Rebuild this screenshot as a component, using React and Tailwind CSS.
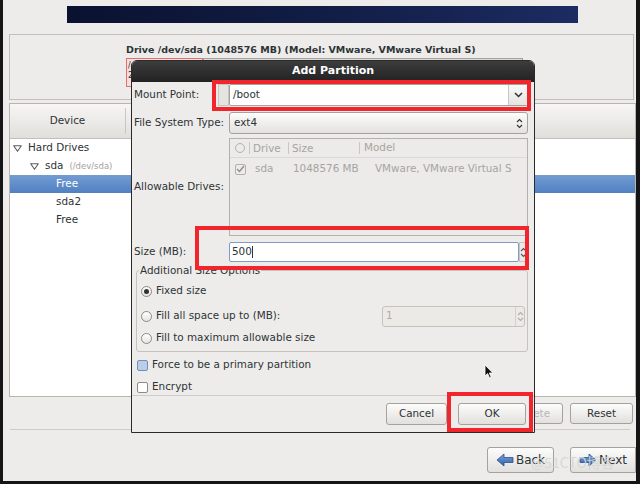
import React from 'react'

function Tri() {
  return (
    <svg width="9" height="7" viewBox="0 0 9 7" className="shrink-0">
      <path d="M0.7 0.7 H8.3 L4.5 6.3 Z" fill="none" stroke="#5c5c5c" strokeWidth="1.1" strokeLinejoin="round" />
    </svg>
  )
}

function Radio({ checked }) {
  return (
    <span className="w-[11px] h-[11px] rounded-full border border-[#8d8a85] bg-gradient-to-b from-white to-[#e6e4e1] flex items-center justify-center shrink-0">
      {checked && <span className="w-[5px] h-[5px] rounded-full bg-[#2e3436]" />}
    </span>
  )
}

function Box({ blue }) {
  return (
    <span
      className={`w-[11px] h-[11px] rounded-[2px] border shrink-0 ${
        blue ? 'border-[#6f8fbf] bg-[#bccde6]' : 'border-[#8d8a85] bg-white'
      }`}
    />
  )
}

function Btn({ children, className = '', dim }) {
  return (
    <div
      className={`flex items-center justify-center rounded-[3px] border border-[#a5a29d] bg-gradient-to-b from-[#fcfcfb] to-[#e2e0dd] ${
        dim ? 'text-[#b9b6b1]' : 'text-[#2e3436]'
      } ${className}`}
    >
      {children}
    </div>
  )
}

function Chevron() {
  return (
    <svg width="9" height="6" viewBox="0 0 9 6">
      <path d="M1 1 L4.5 4.5 L8 1" fill="none" stroke="#2e3436" strokeWidth="1.5" />
    </svg>
  )
}

function UpDown({ color = '#2e3436' }) {
  return (
    <svg width="7" height="11" viewBox="0 0 7 11">
      <path d="M1 4 L3.5 1.5 L6 4 M1 7 L3.5 9.5 L6 7" fill="none" stroke={color} strokeWidth="1.1" />
    </svg>
  )
}

function Arrow({ dir }) {
  const d = dir === 'left' ? 'M1 7 L8 1 V4.5 H17 V9.5 H8 V13 Z' : 'M17 7 L10 1 V4.5 H1 V9.5 H10 V13 Z'
  return (
    <svg width="18" height="14" viewBox="0 0 18 14">
      <defs>
        <linearGradient id={`g${dir}`} x1="0" y1="0" x2="0" y2="1">
          <stop offset="0" stopColor="#7aa3dc" />
          <stop offset="1" stopColor="#2f5fa8" />
        </linearGradient>
      </defs>
      <path d={d} fill={`url(#g${dir})`} stroke="#284f8c" strokeWidth="0.8" strokeLinejoin="round" />
    </svg>
  )
}

const tree = [
  { pad: 'pl-[3px]', tri: true, label: 'Hard Drives' },
  { pad: 'pl-[20px]', tri: true, label: 'sda', sub: '(/dev/sda)' },
  { pad: 'pl-[46px]', label: 'Free', sel: true },
  { pad: 'pl-[46px]', label: 'sda2' },
  { pad: 'pl-[46px]', label: 'Free' },
]

function AddPartition() {
  return (
    <div className="absolute left-[131px] top-[60px] w-[404px] h-[373px] border border-[#2a2a2a] rounded-t-[6px] bg-[#edeceb] flex flex-col overflow-hidden">
      <div className="h-[21px] shrink-0 bg-gradient-to-b from-[#3d3d3d] to-[#222] flex items-center justify-center text-white font-bold text-[11px]">
        Add Partition
      </div>

      <div className="flex flex-col pl-[2px] pr-[6px]">
        {/* mount point */}
        <div className="mt-[2px] h-[22px] flex items-center">
          <span className="w-[84px]">Mount Point:</span>
          <div className="w-[11px] h-[22px] border border-[#c9c6c1] bg-[#e6e4e1]" />
          <div className="flex-1 h-[22px] flex border border-[#a5a29d] bg-white rounded-[2px]">
            <span className="flex-1 flex items-center pl-[3px]">/boot</span>
            <span className="w-[19px] border-l border-[#c9c6c1] bg-gradient-to-b from-[#fafaf9] to-[#e6e4e1] flex items-center justify-center">
              <Chevron />
            </span>
          </div>
        </div>

        {/* fs type */}
        <div className="mt-[6px] h-[22px] flex items-center">
          <span className="w-[95px]">File System Type:</span>
          <div className="flex-1 h-[22px] flex items-center justify-between pl-[4px] pr-[4px] border border-[#a5a29d] rounded-[3px] bg-gradient-to-b from-[#fcfcfb] to-[#e4e2df]">
            <span>ext4</span>
            <UpDown />
          </div>
        </div>

        {/* drives */}
        <div className="mt-[4px] h-[98px] flex items-center">
          <span className="w-[95px]">Allowable Drives:</span>
          <div className="flex-1 h-[98px] border border-[#b4b1ac] bg-[#ecebe9] text-[#a7a49f] flex flex-col">
            <div className="h-[19px] flex items-center border-b border-[#dcdad6]">
              <span className="w-[20px] flex justify-center border-r border-[#c9c6c1] h-[12px] items-center">
                <span className="w-[10px] h-[10px] rounded-full border border-[#b4b1ac]" />
              </span>
              <span className="w-[39px] pl-[3px] border-r border-[#c9c6c1] leading-[12px]">Drive</span>
              <span className="w-[71px] pl-[3px] border-r border-[#c9c6c1] leading-[12px]">Size</span>
              <span className="pl-[4px]">Model</span>
            </div>
            <div className="h-[22px] flex items-center">
              <span className="w-[20px] flex justify-center">
                <span className="w-[11px] h-[11px] border border-[#b4b1ac] rounded-[2px] flex items-center justify-center">
                  <svg width="9" height="8" viewBox="0 0 9 8">
                    <path d="M1 4 L3.5 6.5 L8 1" fill="none" stroke="#8f8c87" strokeWidth="1.4" />
                  </svg>
                </span>
              </span>
              <span className="w-[39px] pl-[5px]">sda</span>
              <span className="w-[86px] pl-[4px]">1048576 MB</span>
              <span>VMware, VMware Virtual S</span>
            </div>
          </div>
        </div>

        {/* size */}
        <div className="mt-[6px] h-[20px] flex items-center">
          <span className="w-[95px]">Size (MB):</span>
          <div className="flex-1 h-[20px] flex">
            <span className="flex-1 flex items-center pl-[2px] bg-white border border-[#7d9cc8] rounded-[2px]">
              500<span className="w-px h-[12px] bg-[#2e3436]" />
            </span>
            <span className="w-[9px] flex items-center justify-center border border-[#c9c6c1] bg-[#eceae7]">
              <UpDown color="#555" />
            </span>
          </div>
        </div>

        {/* additional options */}
        <div className="relative mt-[8px] ml-[2px] h-[82px] border border-[#c6c3be] rounded-[3px] flex flex-col pl-[4px] pr-[2px]">
          <span className="absolute -top-[8px] left-[2px] px-[1px] bg-[#edeceb]">Additional Size Options</span>
          <div className="mt-[12px] h-[16px] flex items-center gap-[4px]">
            <Radio checked />
            <span>Fixed size</span>
          </div>
          <div className="mt-[6px] h-[22px] flex items-center gap-[4px]">
            <Radio />
            <span className="flex-1">Fill all space up to (MB):</span>
            <div className="w-[143px] h-[21px] flex border border-[#c6c3be] rounded-[3px] bg-[#eceae7] text-[#b0ada8]">
              <span className="flex-1 flex items-center pl-[3px]">1</span>
              <span className="w-[9px] flex items-center justify-center border-l border-[#d3d0cb]">
                <UpDown color="#b0ada8" />
              </span>
            </div>
          </div>
          <div className="mt-[3px] h-[16px] flex items-center gap-[4px]">
            <Radio />
            <span>Fill to maximum allowable size</span>
          </div>
        </div>

        <div className="mt-[6px] h-[14px] flex items-center gap-[4px] pl-[3px]">
          <Box blue />
          <span>Force to be a primary partition</span>
        </div>
        <div className="mt-[8px] h-[14px] flex items-center gap-[4px] pl-[3px]">
          <Box />
          <span>Encrypt</span>
        </div>
      </div>

      <div className="mt-[1px] h-px bg-[#cfccc7]" />
      <div className="mt-[7px] flex justify-end gap-[11px] pr-[8px]">
        <Btn className="w-[61px] h-[22px]">Cancel</Btn>
        <Btn className="w-[68px] h-[22px]">OK</Btn>
      </div>
    </div>
  )
}

export default function App() {
  return (
    <div className="relative w-[640px] h-[484px] overflow-hidden bg-[#151515] pl-[3px] pr-[4px] pb-[3px] font-['DejaVu_Sans',sans-serif] text-[10.4px] text-[#2e3436]">
      <div className="h-full bg-[#edeceb] flex flex-col">
        <div className="mt-[6px] ml-[64px] w-[511px] h-[17px] bg-gradient-to-r from-[#0a1230] via-[#121d45] to-[#1c2b62]" />

        <div className="mt-[11px] ml-[6px] mr-[2px] h-[66px] border border-[#c2bfba] pl-[116px] pt-[9px]">
          <div className="font-bold text-[9.5px] leading-[12px]">Drive /dev/sda (1048576 MB) (Model: VMware, VMware Virtual S)</div>
          <div className="mt-[2px] h-[29px] flex">
            <div className="w-[77px] border border-[#e07070] bg-[#f4dede] text-[8px] leading-[10px] pl-[1px] pt-[2px]">
              <div>/dev/sda1</div>
              <div>200 MB</div>
            </div>
            <div className="w-[320px] border border-[#a5a29d] bg-[#dcdad6]" />
          </div>
        </div>

        <div className="mt-[3px] ml-[6px] h-[294px] border border-[#b8b5b0] flex flex-col">
          <div className="h-[35px] shrink-0 flex items-center bg-gradient-to-b from-[#f7f6f5] to-[#e1dfdb] border-b border-[#c2bfba]">
            <span className="w-[115px] text-center">Device</span>
            <span className="w-px h-[26px] bg-[#c9c6c1]" />
          </div>
          <div className="flex-1 bg-white flex flex-col">
            {tree.map((r, i) => (
              <div
                key={i}
                className={`h-[18px] flex items-center gap-[6px] ${r.pad} ${
                  r.sel ? 'bg-gradient-to-b from-[#729cd2] to-[#5181c2] text-white' : ''
                }`}
              >
                {r.tri && <Tri />}
                <span>{r.label}</span>
                {r.sub && <span className="text-[8.5px] text-[#a3a09b]">{r.sub}</span>}
              </div>
            ))}
          </div>
        </div>

        <div className="mt-[6px] h-[21px] flex justify-end gap-[7px] pr-[3px]">
          <Btn className="w-[60px] h-[21px]" dim>Delete</Btn>
          <Btn className="w-[63px] h-[21px]">Reset</Btn>
        </div>

        <div className="mt-[5px] ml-[7px] mr-[6px] h-px bg-[#cfccc7]" />

        <div className="mt-[17px] h-[26px] flex justify-end gap-[16px]">
          <Btn className="w-[67px] h-[26px] gap-[2px] text-[12px]">
            <Arrow dir="left" />
            <span>Back</span>
          </Btn>
          <Btn className="w-[66px] h-[26px] gap-[2px] text-[12px] border-[#7a9fd4] rounded-r-none">
            <Arrow dir="right" />
            <span>Next</span>
          </Btn>
        </div>
      </div>

      <AddPartition />

      {/* annotation boxes */}
      <div className="absolute left-[212px] top-[80px] w-[319px] h-[31px] border-[4px] border-[#f0262c]" />
      <div className="absolute left-[195px] top-[226px] w-[334px] h-[44px] border-[4px] border-[#f0262c]" />
      <div className="absolute left-[447px] top-[392px] w-[86px] h-[40px] border-[4px] border-[#f0262c]" />

      {/* mouse pointer */}
      <svg className="absolute left-[484px] top-[364px]" width="10" height="15" viewBox="0 0 10 15">
        <path d="M1 1 V12 L3.6 9.6 L5.6 14 L7.2 13.3 L5.3 9 H8.8 Z" fill="#111" stroke="#fff" strokeWidth="0.8" />
      </svg>

      <span className="absolute left-[531px] top-[452px] text-[14px] text-[#d6d6d6] opacity-90 font-['Noto_Sans_CJK_SC',sans-serif]">
        @51CTO博客
      </span>
    </div>
  )
}
